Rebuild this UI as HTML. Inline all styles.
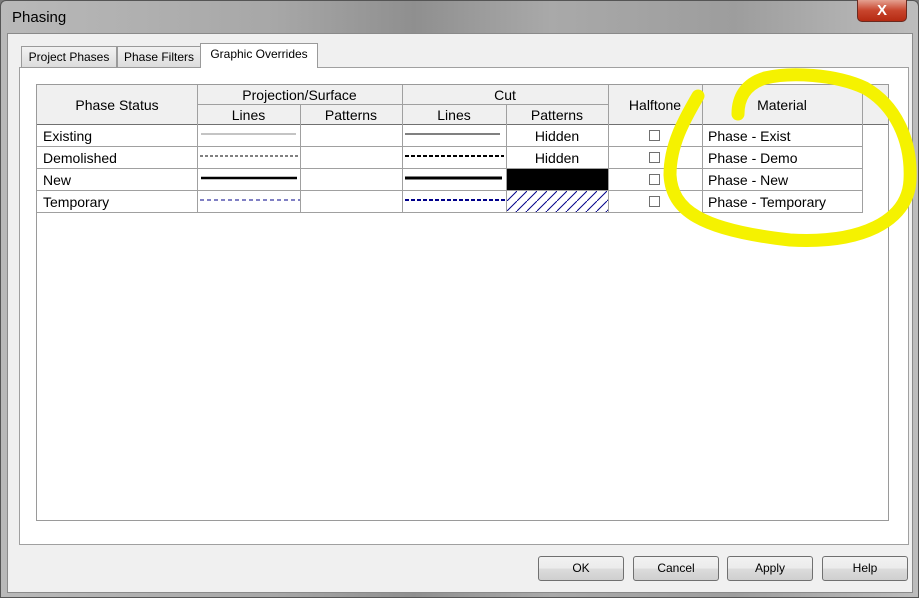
<!DOCTYPE html>
<html><head><style>
*{margin:0;padding:0;box-sizing:border-box}
body{width:919px;height:598px;overflow:hidden;background:#7a7a7a;font-family:"Liberation Sans",sans-serif;position:relative}
.abs{position:absolute}
#title{left:0;top:0;width:919px;height:598px;background:linear-gradient(90deg,#b9b9b9 0%,#a7a7a7 30%,#8f8f8f 45%,#a9a9a9 60%,#9d9d9d 80%,#bdbdbd 100%);border:1px solid #555;border-radius:6px 6px 0 0}
#body{left:7px;top:33px;width:906px;height:560px;background:#f0f0f0;border:1px solid #8a8a8a}
.tab{top:46px;height:22px;background:linear-gradient(#f2f2f2,#dcdcdc);border:1px solid #9a9a9a;font-size:12px;line-height:20px;text-align:center;color:#000}
#panel{left:19px;top:67px;width:890px;height:478px;background:#fff;border:1px solid #a0a0a0}
#grid{left:36px;top:84px;width:853px;height:437px;border:1px solid #9a9a9a;background:#fff}
.c{position:absolute;font-size:14px;color:#000;white-space:nowrap}
.h{background:#f0f0f0}
.btn{top:556px;width:86px;height:25px;border:1px solid #707070;border-radius:3px;background:linear-gradient(#f2f2f2 0%,#ebebeb 50%,#dcdcdc 51%,#cfcfcf 100%);font-size:12px;text-align:center;line-height:23px}
.vl{position:absolute;width:1px;background:#a0a0a0}
.hl{position:absolute;height:1px;background:#a0a0a0}
.cb{position:absolute;width:11px;height:11px;border:1px solid #707070;background:#fff}
</style></head><body>
<div id="title" class="abs"></div>
<div class="abs" style="left:12px;top:9px;font-size:15px;color:#000">Phasing</div>
<div class="abs" style="left:857px;top:0;width:50px;height:22px;background:linear-gradient(#e4a191,#c8452d 50%,#b52a12);border:1px solid #6a2a20;border-top:none;border-radius:0 0 5px 5px;color:#fff;font-weight:bold;font-size:15px;text-align:center;line-height:21px">X</div>
<div id="body" class="abs"></div>
<div id="panel" class="abs"></div>
<div class="abs tab" style="left:21px;width:96px">Project Phases</div>
<div class="abs tab" style="left:117px;width:84px">Phase Filters</div>
<div class="abs tab" style="left:200px;top:43px;width:118px;height:25px;background:#fff;border-bottom:none">Graphic Overrides</div>
<div id="grid" class="abs"></div>
<div class="abs h" style="left:37px;top:85px;width:851px;height:39px"></div>
<div class="abs" style="left:37px;top:124px;width:826px;height:88px;background:#fff"></div>
<div class="hl" style="left:197px;top:104px;width:411px"></div>
<div class="hl" style="left:37px;top:124px;width:851px;background:#707070"></div>
<div class="hl" style="left:37px;top:146px;width:826px"></div>
<div class="hl" style="left:37px;top:168px;width:826px"></div>
<div class="hl" style="left:37px;top:190px;width:826px"></div>
<div class="hl" style="left:37px;top:212px;width:826px"></div>
<div class="vl" style="left:197px;top:85px;height:127px"></div>
<div class="vl" style="left:300px;top:104px;height:108px"></div>
<div class="vl" style="left:402px;top:85px;height:127px"></div>
<div class="vl" style="left:506px;top:104px;height:108px"></div>
<div class="vl" style="left:608px;top:85px;height:127px"></div>
<div class="vl" style="left:702px;top:85px;height:127px"></div>
<div class="vl" style="left:862px;top:85px;height:127px"></div>
<div class="c" style="left:37px;top:97px;width:160px;text-align:center">Phase Status</div>
<div class="c" style="left:197px;top:87px;width:205px;text-align:center">Projection/Surface</div>
<div class="c" style="left:402px;top:87px;width:206px;text-align:center">Cut</div>
<div class="c" style="left:197px;top:107px;width:103px;text-align:center">Lines</div>
<div class="c" style="left:300px;top:107px;width:102px;text-align:center">Patterns</div>
<div class="c" style="left:402px;top:107px;width:104px;text-align:center">Lines</div>
<div class="c" style="left:506px;top:107px;width:102px;text-align:center">Patterns</div>
<div class="c" style="left:608px;top:97px;width:94px;text-align:center">Halftone</div>
<div class="c" style="left:702px;top:97px;width:160px;text-align:center">Material</div>
<div class="c" style="left:43px;top:128px">Existing</div>
<div class="c" style="left:43px;top:150px">Demolished</div>
<div class="c" style="left:43px;top:172px">New</div>
<div class="c" style="left:43px;top:194px">Temporary</div>
<div class="c" style="left:506px;top:128px;width:102px;text-align:center">Hidden</div>
<div class="c" style="left:506px;top:150px;width:102px;text-align:center">Hidden</div>
<div class="abs" style="left:507px;top:169px;width:101px;height:21px;background:#000"></div>
<svg class="abs" style="left:507px;top:191px" width="101" height="21"><defs><pattern id="p" width="10" height="10" patternUnits="userSpaceOnUse"><path d="M-1 11L11 -1" stroke="#00008a" stroke-width="1"/></pattern></defs><rect width="101" height="21" fill="url(#p)"/></svg>
<svg class="abs" style="left:198px;top:125px" width="410" height="87">
<line x1="3" y1="9" x2="98" y2="9" stroke="#888" stroke-width="1"/>
<line x1="2" y1="31" x2="102" y2="31" stroke="#000" stroke-dasharray="3 2"/>
<line x1="3" y1="53" x2="99" y2="53" stroke="#000" stroke-width="2.5"/>
<line x1="2" y1="75" x2="102" y2="75" stroke="#00008a" stroke-dasharray="4 3"/>
<line x1="207" y1="9" x2="302" y2="9" stroke="#808080" stroke-width="2"/>
<line x1="207" y1="31" x2="306" y2="31" stroke="#000" stroke-width="2" stroke-dasharray="4 2"/>
<line x1="207" y1="53" x2="304" y2="53" stroke="#000" stroke-width="3"/>
<line x1="207" y1="75" x2="308" y2="75" stroke="#00008a" stroke-width="2" stroke-dasharray="4 2"/>
</svg>
<div class="cb" style="left:649px;top:130px"></div>
<div class="cb" style="left:649px;top:152px"></div>
<div class="cb" style="left:649px;top:174px"></div>
<div class="cb" style="left:649px;top:196px"></div>
<div class="c" style="left:708px;top:128px">Phase - Exist</div>
<div class="c" style="left:708px;top:150px">Phase - Demo</div>
<div class="c" style="left:708px;top:172px">Phase - New</div>
<div class="c" style="left:708px;top:194px">Phase - Temporary</div>
<svg class="abs" style="left:0;top:0" width="919" height="598">
<path d="M698 96 C684 120 670 145 670 175 C672 210 700 230 790 240 C860 244 908 222 910 180 C912 140 895 105 865 88 C835 74 790 72 765 78 C745 84 738 98 738 114" fill="none" stroke="#f5f200" stroke-width="13" stroke-linecap="round"/>
</svg>
<div class="abs btn" style="left:538px">OK</div>
<div class="abs btn" style="left:633px">Cancel</div>
<div class="abs btn" style="left:727px">Apply</div>
<div class="abs btn" style="left:822px">Help</div>
</body></html>
